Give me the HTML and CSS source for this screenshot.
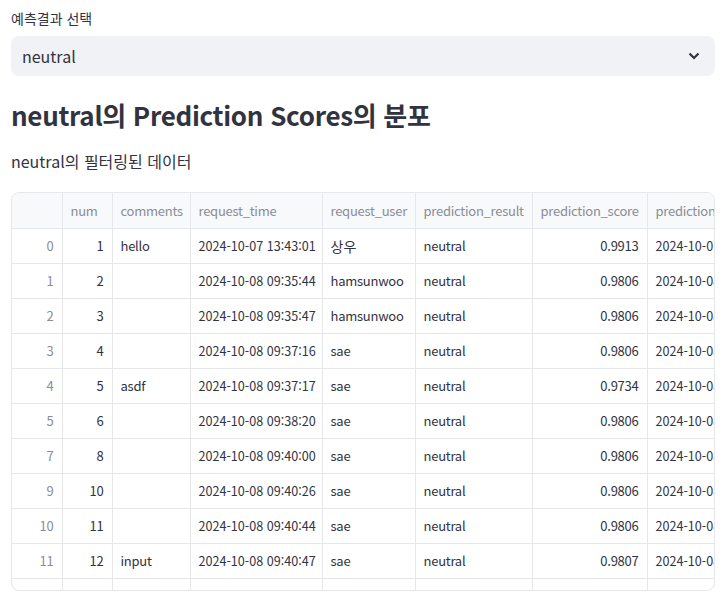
FILE: index.html
```html
<!DOCTYPE html>
<html lang="ko">
<head>
<meta charset="utf-8">
<link rel="stylesheet" href="styles.css">
</head>
<body>
<main class="page">
  <label class="field-label">예측결과 선택</label>
  <div class="select">
    <span class="select-value">neutral</span>
    <svg class="chevron" width="12" height="8" viewBox="0 0 12 8"><path d="M1.5 1.5 L6 6 L10.5 1.5" fill="none" stroke="#31333f" stroke-width="2.2"/></svg>
  </div>
  <h3 class="title">neutral의 Prediction Scores의 분포</h3>
  <p class="caption">neutral의 필터링된 데이터</p>
  <div class="grid">
    <table>
      <colgroup>
        <col class="c-idx"><col class="c-num"><col class="c-com"><col class="c-time"><col class="c-user"><col class="c-res"><col class="c-score"><col class="c-more">
      </colgroup>
      <thead>
        <tr><th></th><th>num</th><th>comments</th><th>request_time</th><th>request_user</th><th>prediction_result</th><th>prediction_score</th><th>prediction_time</th></tr>
      </thead>
      <tbody>
        <tr><td class="idx">0</td><td class="r">1</td><td>hello</td><td class="t">2024-10-07 13:43:01</td><td class="ko">상우</td><td>neutral</td><td class="r">0.9913</td><td class="t">2024-10-07</td></tr>
        <tr><td class="idx">1</td><td class="r">2</td><td></td><td class="t">2024-10-08 09:35:44</td><td>hamsunwoo</td><td>neutral</td><td class="r">0.9806</td><td class="t">2024-10-08</td></tr>
        <tr><td class="idx">2</td><td class="r">3</td><td></td><td class="t">2024-10-08 09:35:47</td><td>hamsunwoo</td><td>neutral</td><td class="r">0.9806</td><td class="t">2024-10-08</td></tr>
        <tr><td class="idx">3</td><td class="r">4</td><td></td><td class="t">2024-10-08 09:37:16</td><td>sae</td><td>neutral</td><td class="r">0.9806</td><td class="t">2024-10-08</td></tr>
        <tr><td class="idx">4</td><td class="r">5</td><td>asdf</td><td class="t">2024-10-08 09:37:17</td><td>sae</td><td>neutral</td><td class="r">0.9734</td><td class="t">2024-10-08</td></tr>
        <tr><td class="idx">5</td><td class="r">6</td><td></td><td class="t">2024-10-08 09:38:20</td><td>sae</td><td>neutral</td><td class="r">0.9806</td><td class="t">2024-10-08</td></tr>
        <tr><td class="idx">7</td><td class="r">8</td><td></td><td class="t">2024-10-08 09:40:00</td><td>sae</td><td>neutral</td><td class="r">0.9806</td><td class="t">2024-10-08</td></tr>
        <tr><td class="idx">9</td><td class="r">10</td><td></td><td class="t">2024-10-08 09:40:26</td><td>sae</td><td>neutral</td><td class="r">0.9806</td><td class="t">2024-10-08</td></tr>
        <tr><td class="idx">10</td><td class="r">11</td><td></td><td class="t">2024-10-08 09:40:44</td><td>sae</td><td>neutral</td><td class="r">0.9806</td><td class="t">2024-10-08</td></tr>
        <tr><td class="idx">11</td><td class="r">12</td><td>input</td><td class="t">2024-10-08 09:40:47</td><td>sae</td><td>neutral</td><td class="r">0.9807</td><td class="t">2024-10-08</td></tr>
        <tr class="partial"><td class="idx"></td><td class="r"></td><td></td><td></td><td></td><td></td><td class="r"></td><td></td></tr>
      </tbody>
    </table>
  </div>
</main>
</body>
</html>
```
FILE: styles.css
```css
* { box-sizing: border-box; }
html, body { margin: 0; padding: 0; background: #fff; }
body {
  font-family: "Noto Sans CJK KR", "Noto Sans", sans-serif;
  color: #31333f;
}
.page {
  padding: 7px 10px 0 11px;
  display: flex;
  flex-direction: column;
}
.field-label {
  font-size: 14px;
  line-height: 22px;
  margin-bottom: 7px;
}
.select {
  height: 40px;
  background: #f0f2f6;
  border-radius: 8px;
  display: flex;
  align-items: center;
  justify-content: space-between;
  padding: 0 15px 0 11px;
}
.select-value { font-size: 16px; }
.chevron { display: block; }
.title {
  margin: 22px 0 0;
  font-size: 26px;
  font-weight: 700;
  line-height: 34px;
  letter-spacing: -0.3px;
}
.caption {
  margin: 17px 0 0;
  font-size: 16px;
  line-height: 24px;
}
.grid {
  margin-top: 19px;
  height: 399px;
  border: 1px solid #e6e7ea;
  border-radius: 8px;
  overflow: hidden;
}
table {
  border-collapse: collapse;
  table-layout: fixed;
  width: 780px;
  font-size: 13px;
  letter-spacing: -0.25px;
}
.c-idx { width: 50px; }
.c-num { width: 50px; }
.c-com { width: 78px; }
.c-time { width: 132px; }
.c-user { width: 93px; }
.c-res { width: 117px; }
.c-score { width: 115px; }
.c-more { width: 145px; }
th, td {
  border-right: 1px solid #e6e7ea;
  border-bottom: 1px solid #e6e7ea;
  padding: 0 8px;
  white-space: nowrap;
  overflow: hidden;
  text-align: left;
}
th {
  height: 35px;
  background: #f8f9fb;
  color: #8b8d96;
  font-weight: 400;
}
td { height: 35px; }
td.r { text-align: right; }
td.t { font-size: 12.6px; letter-spacing: 0; }
td.idx { text-align: right; color: #8b8d96; }
td.ko { font-size: 14px; letter-spacing: 0; }
```
